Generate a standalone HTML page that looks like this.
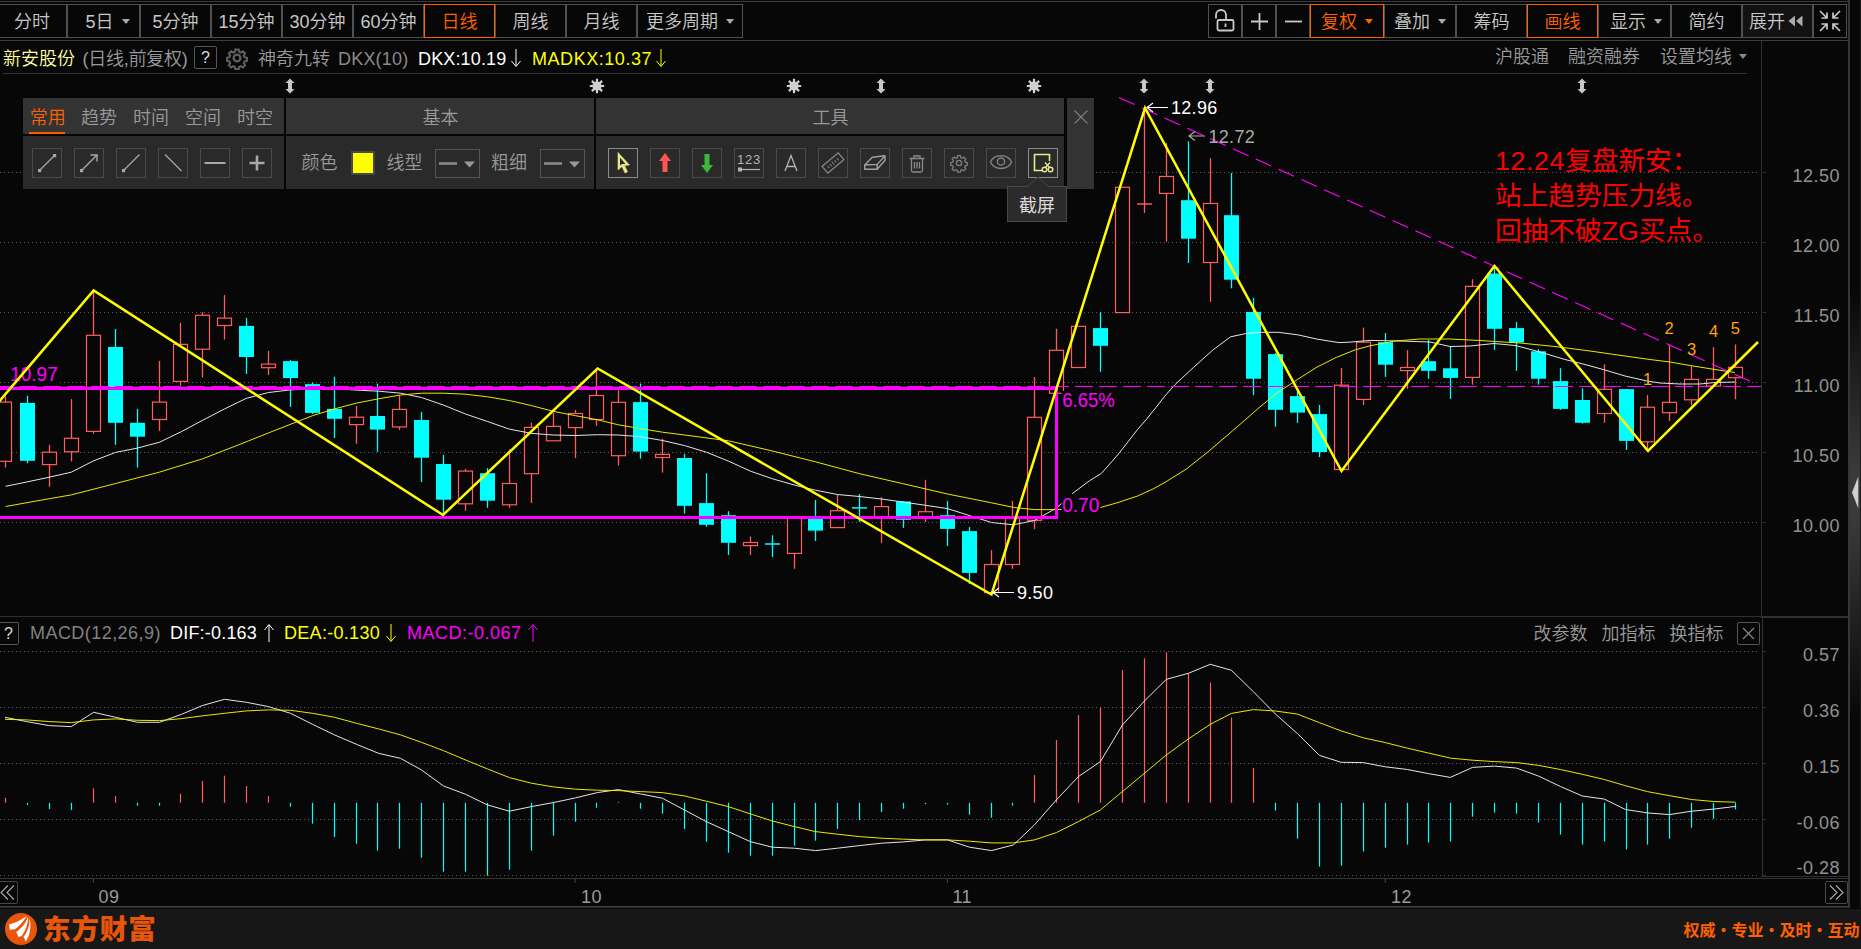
<!DOCTYPE html>
<html lang="zh"><head><meta charset="utf-8"><title>新安股份 日线</title>
<style>
html,body{margin:0;padding:0;background:#070707;}
body{width:1861px;height:949px;position:relative;overflow:hidden;font-family:"Liberation Sans","Noto Sans CJK SC",sans-serif;color:#c8c8c8;font-weight:350;}
.abs{position:absolute;}
.t{position:absolute;white-space:nowrap;line-height:1;}
.btn{position:absolute;top:4px;height:32px;border:1px solid #505050;box-sizing:content-box;text-align:center;line-height:34px;font-size:18px;color:#c8c8c8;white-space:nowrap;}
.btn.on{border-color:#ff6000;color:#ff6000;}
.tri{display:inline-block;width:0;height:0;border-left:4px solid transparent;border-right:4px solid transparent;border-top:5px solid #aaa;vertical-align:middle;margin-left:8px;position:relative;top:-2px;}
.on .tri{border-top-color:#ff6000;}
.ax{position:absolute;left:1780px;width:60px;text-align:right;font-size:18px;color:#929292;line-height:20px;height:20px;letter-spacing:0.5px;}
.tool{position:absolute;top:148px;width:28px;height:28px;border:1px solid #4a4a4a;}
.hd{position:absolute;background:#333;top:98px;height:35.5px;}
.bd{position:absolute;background:#2a2a2a;top:136px;height:53px;}
.tab{position:absolute;top:108px;font-size:18px;line-height:20px;color:#9a9a9a;white-space:nowrap;}
</style></head>
<body>
<svg class="abs" style="left:0;top:0" width="1861" height="949" viewBox="0 0 1861 949">
<line x1="0" y1="172.5" x2="1760" y2="172.5" stroke="#5c5c5c" stroke-width="1" stroke-dasharray="1 3"/>
<line x1="1763" y1="172.5" x2="1766" y2="172.5" stroke="#2e2e2e" stroke-width="1"/>
<line x1="0" y1="242.5" x2="1760" y2="242.5" stroke="#5c5c5c" stroke-width="1" stroke-dasharray="1 3"/>
<line x1="1763" y1="242.5" x2="1766" y2="242.5" stroke="#2e2e2e" stroke-width="1"/>
<line x1="0" y1="312.5" x2="1760" y2="312.5" stroke="#5c5c5c" stroke-width="1" stroke-dasharray="1 3"/>
<line x1="1763" y1="312.5" x2="1766" y2="312.5" stroke="#2e2e2e" stroke-width="1"/>
<line x1="0" y1="382.5" x2="1760" y2="382.5" stroke="#5c5c5c" stroke-width="1" stroke-dasharray="1 3"/>
<line x1="1763" y1="382.5" x2="1766" y2="382.5" stroke="#2e2e2e" stroke-width="1"/>
<line x1="0" y1="452.5" x2="1760" y2="452.5" stroke="#5c5c5c" stroke-width="1" stroke-dasharray="1 3"/>
<line x1="1763" y1="452.5" x2="1766" y2="452.5" stroke="#2e2e2e" stroke-width="1"/>
<line x1="0" y1="522.5" x2="1760" y2="522.5" stroke="#5c5c5c" stroke-width="1" stroke-dasharray="1 3"/>
<line x1="1763" y1="522.5" x2="1766" y2="522.5" stroke="#2e2e2e" stroke-width="1"/>
<line x1="0" y1="651.5" x2="1760" y2="651.5" stroke="#5c5c5c" stroke-width="1" stroke-dasharray="1 3"/>
<line x1="1763" y1="651.5" x2="1766" y2="651.5" stroke="#2e2e2e" stroke-width="1"/>
<line x1="0" y1="707.5" x2="1760" y2="707.5" stroke="#5c5c5c" stroke-width="1" stroke-dasharray="1 3"/>
<line x1="1763" y1="707.5" x2="1766" y2="707.5" stroke="#2e2e2e" stroke-width="1"/>
<line x1="0" y1="763.5" x2="1760" y2="763.5" stroke="#5c5c5c" stroke-width="1" stroke-dasharray="1 3"/>
<line x1="1763" y1="763.5" x2="1766" y2="763.5" stroke="#2e2e2e" stroke-width="1"/>
<line x1="0" y1="819.5" x2="1760" y2="819.5" stroke="#5c5c5c" stroke-width="1" stroke-dasharray="1 3"/>
<line x1="1763" y1="819.5" x2="1766" y2="819.5" stroke="#2e2e2e" stroke-width="1"/>
<line x1="0" y1="875.5" x2="1760" y2="875.5" stroke="#5c5c5c" stroke-width="1" stroke-dasharray="1 3"/>
<line x1="1763" y1="875.5" x2="1766" y2="875.5" stroke="#2e2e2e" stroke-width="1"/>
<line x1="0" y1="1.5" x2="1849" y2="1.5" stroke="#3c3c3c" stroke-width="1"/>
<line x1="0" y1="40.5" x2="1849" y2="40.5" stroke="#3c3c3c" stroke-width="1"/>
<line x1="3" y1="73.5" x2="1747" y2="73.5" stroke="#333" stroke-width="1"/>
<line x1="1761.5" y1="41" x2="1761.5" y2="616" stroke="#303030" stroke-width="1"/>
<line x1="1762.5" y1="617" x2="1762.5" y2="876.5" stroke="#303030" stroke-width="1"/>
<line x1="1761" y1="876.5" x2="1849" y2="876.5" stroke="#303030" stroke-width="1"/>
<line x1="0" y1="616.5" x2="1761" y2="616.5" stroke="#303030" stroke-width="1"/>
<line x1="1761" y1="617" x2="1848" y2="617" stroke="#303030" stroke-width="2"/>
<line x1="0" y1="878.5" x2="1848" y2="878.5" stroke="#333" stroke-width="1"/>
<line x1="0" y1="906.7" x2="1848" y2="906.7" stroke="#444" stroke-width="1.4"/>
<line x1="93.3" y1="878" x2="93.3" y2="883" stroke="#444" stroke-width="1"/>
<line x1="575.0" y1="878" x2="575.0" y2="883" stroke="#444" stroke-width="1"/>
<line x1="947.3" y1="878" x2="947.3" y2="883" stroke="#444" stroke-width="1"/>
<line x1="1385.2" y1="878" x2="1385.2" y2="883" stroke="#444" stroke-width="1"/>
<line x1="5.5" y1="396.3" x2="5.5" y2="402.1" stroke="#ff5c5c" stroke-width="1.3"/>
<line x1="5.5" y1="461.3" x2="5.5" y2="467.6" stroke="#ff5c5c" stroke-width="1.3"/>
<rect x="-2.5" y="402.1" width="14" height="59.2" fill="#070707" stroke="#ff5c5c" stroke-width="1.2"/>
<line x1="27.5" y1="395.8" x2="27.5" y2="463.3" stroke="#00ffff" stroke-width="1.3"/>
<rect x="20" y="402.9" width="15" height="57.9" fill="#00ffff"/>
<line x1="49.5" y1="444.8" x2="49.5" y2="452.2" stroke="#ff5c5c" stroke-width="1.3"/>
<line x1="49.5" y1="464.6" x2="49.5" y2="486.8" stroke="#ff5c5c" stroke-width="1.3"/>
<rect x="42.5" y="452.2" width="14" height="12.4" fill="#070707" stroke="#ff5c5c" stroke-width="1.2"/>
<line x1="71.5" y1="399.1" x2="71.5" y2="438.3" stroke="#ff5c5c" stroke-width="1.3"/>
<line x1="71.5" y1="451.7" x2="71.5" y2="461.5" stroke="#ff5c5c" stroke-width="1.3"/>
<rect x="64.5" y="438.3" width="14" height="13.4" fill="#070707" stroke="#ff5c5c" stroke-width="1.2"/>
<line x1="93.5" y1="290.6" x2="93.5" y2="335.3" stroke="#ff5c5c" stroke-width="1.3"/>
<line x1="93.5" y1="431.4" x2="93.5" y2="433.7" stroke="#ff5c5c" stroke-width="1.3"/>
<rect x="86.5" y="335.3" width="14" height="96.1" fill="#070707" stroke="#ff5c5c" stroke-width="1.2"/>
<line x1="115.5" y1="329.0" x2="115.5" y2="444.8" stroke="#00ffff" stroke-width="1.3"/>
<rect x="108" y="347.0" width="15" height="75.8" fill="#00ffff"/>
<line x1="137.5" y1="408.9" x2="137.5" y2="467.6" stroke="#00ffff" stroke-width="1.3"/>
<rect x="130" y="422.8" width="15" height="13.9" fill="#00ffff"/>
<line x1="159.5" y1="360.9" x2="159.5" y2="402.1" stroke="#ff5c5c" stroke-width="1.3"/>
<line x1="159.5" y1="419.5" x2="159.5" y2="430.9" stroke="#ff5c5c" stroke-width="1.3"/>
<rect x="152.5" y="402.1" width="14" height="17.4" fill="#070707" stroke="#ff5c5c" stroke-width="1.2"/>
<line x1="180.5" y1="322.9" x2="180.5" y2="344.4" stroke="#ff5c5c" stroke-width="1.3"/>
<line x1="180.5" y1="381.4" x2="180.5" y2="385.7" stroke="#ff5c5c" stroke-width="1.3"/>
<rect x="173.5" y="344.4" width="14" height="37.0" fill="#070707" stroke="#ff5c5c" stroke-width="1.2"/>
<line x1="202.5" y1="312.1" x2="202.5" y2="315.3" stroke="#ff5c5c" stroke-width="1.3"/>
<line x1="202.5" y1="349.2" x2="202.5" y2="377.6" stroke="#ff5c5c" stroke-width="1.3"/>
<rect x="195.5" y="315.3" width="14" height="33.9" fill="#070707" stroke="#ff5c5c" stroke-width="1.2"/>
<line x1="224.5" y1="295.1" x2="224.5" y2="318.1" stroke="#ff5c5c" stroke-width="1.3"/>
<line x1="224.5" y1="325.5" x2="224.5" y2="339.6" stroke="#ff5c5c" stroke-width="1.3"/>
<rect x="217.5" y="318.1" width="14" height="7.4" fill="#070707" stroke="#ff5c5c" stroke-width="1.2"/>
<line x1="246.5" y1="317.8" x2="246.5" y2="374.0" stroke="#00ffff" stroke-width="1.3"/>
<rect x="239" y="325.9" width="15" height="31.1" fill="#00ffff"/>
<line x1="268.5" y1="351.0" x2="268.5" y2="364.1" stroke="#ff5c5c" stroke-width="1.3"/>
<line x1="268.5" y1="367.7" x2="268.5" y2="375.0" stroke="#ff5c5c" stroke-width="1.3"/>
<rect x="261.5" y="364.1" width="14" height="3.6" fill="#070707" stroke="#ff5c5c" stroke-width="1.2"/>
<line x1="290.5" y1="360.0" x2="290.5" y2="406.9" stroke="#00ffff" stroke-width="1.3"/>
<rect x="283" y="361.1" width="15" height="16.9" fill="#00ffff"/>
<line x1="312.5" y1="382.3" x2="312.5" y2="414.0" stroke="#00ffff" stroke-width="1.3"/>
<rect x="305" y="384.1" width="15" height="28.8" fill="#00ffff"/>
<line x1="334.5" y1="376.8" x2="334.5" y2="438.0" stroke="#00ffff" stroke-width="1.3"/>
<rect x="327" y="408.9" width="15" height="9.9" fill="#00ffff"/>
<line x1="356.5" y1="405.9" x2="356.5" y2="417.2" stroke="#ff5c5c" stroke-width="1.3"/>
<line x1="356.5" y1="424.6" x2="356.5" y2="443.8" stroke="#ff5c5c" stroke-width="1.3"/>
<rect x="349.5" y="417.2" width="14" height="7.4" fill="#070707" stroke="#ff5c5c" stroke-width="1.2"/>
<line x1="377.5" y1="383.6" x2="377.5" y2="451.9" stroke="#00ffff" stroke-width="1.3"/>
<rect x="370" y="416.0" width="15" height="13.6" fill="#00ffff"/>
<line x1="399.5" y1="395.7" x2="399.5" y2="409.4" stroke="#ff5c5c" stroke-width="1.3"/>
<line x1="399.5" y1="426.9" x2="399.5" y2="429.9" stroke="#ff5c5c" stroke-width="1.3"/>
<rect x="392.5" y="409.4" width="14" height="17.5" fill="#070707" stroke="#ff5c5c" stroke-width="1.2"/>
<line x1="421.5" y1="411.9" x2="421.5" y2="482.0" stroke="#00ffff" stroke-width="1.3"/>
<rect x="414" y="420.0" width="15" height="37.7" fill="#00ffff"/>
<line x1="443.5" y1="454.9" x2="443.5" y2="515.1" stroke="#00ffff" stroke-width="1.3"/>
<rect x="436" y="464.0" width="15" height="35.7" fill="#00ffff"/>
<line x1="465.5" y1="468.9" x2="465.5" y2="471.1" stroke="#ff5c5c" stroke-width="1.3"/>
<line x1="465.5" y1="503.8" x2="465.5" y2="510.8" stroke="#ff5c5c" stroke-width="1.3"/>
<rect x="458.5" y="471.1" width="14" height="32.7" fill="#070707" stroke="#ff5c5c" stroke-width="1.2"/>
<line x1="487.5" y1="468.1" x2="487.5" y2="507.8" stroke="#00ffff" stroke-width="1.3"/>
<rect x="480" y="473.2" width="15" height="27.5" fill="#00ffff"/>
<line x1="509.5" y1="449.4" x2="509.5" y2="483.5" stroke="#ff5c5c" stroke-width="1.3"/>
<line x1="509.5" y1="504.8" x2="509.5" y2="507.8" stroke="#ff5c5c" stroke-width="1.3"/>
<rect x="502.5" y="483.5" width="14" height="21.3" fill="#070707" stroke="#ff5c5c" stroke-width="1.2"/>
<line x1="531.5" y1="422.6" x2="531.5" y2="427.4" stroke="#ff5c5c" stroke-width="1.3"/>
<line x1="531.5" y1="473.7" x2="531.5" y2="503.0" stroke="#ff5c5c" stroke-width="1.3"/>
<rect x="524.5" y="427.4" width="14" height="46.3" fill="#070707" stroke="#ff5c5c" stroke-width="1.2"/>
<line x1="553.5" y1="412.9" x2="553.5" y2="426.4" stroke="#ff5c5c" stroke-width="1.3"/>
<rect x="546.5" y="426.4" width="14" height="14.4" fill="#070707" stroke="#ff5c5c" stroke-width="1.2"/>
<line x1="575.5" y1="409.9" x2="575.5" y2="413.5" stroke="#ff5c5c" stroke-width="1.3"/>
<line x1="575.5" y1="427.6" x2="575.5" y2="458.0" stroke="#ff5c5c" stroke-width="1.3"/>
<rect x="568.5" y="413.5" width="14" height="14.1" fill="#070707" stroke="#ff5c5c" stroke-width="1.2"/>
<line x1="596.5" y1="369.0" x2="596.5" y2="395.5" stroke="#ff5c5c" stroke-width="1.3"/>
<line x1="596.5" y1="419.5" x2="596.5" y2="425.8" stroke="#ff5c5c" stroke-width="1.3"/>
<rect x="589.5" y="395.5" width="14" height="24.0" fill="#070707" stroke="#ff5c5c" stroke-width="1.2"/>
<line x1="618.5" y1="390.4" x2="618.5" y2="402.3" stroke="#ff5c5c" stroke-width="1.3"/>
<line x1="618.5" y1="455.7" x2="618.5" y2="465.6" stroke="#ff5c5c" stroke-width="1.3"/>
<rect x="611.5" y="402.3" width="14" height="53.4" fill="#070707" stroke="#ff5c5c" stroke-width="1.2"/>
<line x1="640.5" y1="383.6" x2="640.5" y2="458.7" stroke="#00ffff" stroke-width="1.3"/>
<rect x="633" y="402.1" width="15" height="49.5" fill="#00ffff"/>
<line x1="662.5" y1="438.7" x2="662.5" y2="454.4" stroke="#ff5c5c" stroke-width="1.3"/>
<line x1="662.5" y1="457.5" x2="662.5" y2="472.6" stroke="#ff5c5c" stroke-width="1.3"/>
<rect x="655.5" y="454.4" width="14" height="3.1" fill="#070707" stroke="#ff5c5c" stroke-width="1.2"/>
<line x1="684.5" y1="453.9" x2="684.5" y2="513.6" stroke="#00ffff" stroke-width="1.3"/>
<rect x="677" y="458.0" width="15" height="47.8" fill="#00ffff"/>
<line x1="706.5" y1="473.2" x2="706.5" y2="526.8" stroke="#00ffff" stroke-width="1.3"/>
<rect x="699" y="503.1" width="15" height="21.7" fill="#00ffff"/>
<line x1="728.5" y1="511.2" x2="728.5" y2="554.9" stroke="#00ffff" stroke-width="1.3"/>
<rect x="721" y="515.2" width="15" height="27.6" fill="#00ffff"/>
<line x1="750.5" y1="536.5" x2="750.5" y2="542.5" stroke="#ff5c5c" stroke-width="1.3"/>
<line x1="750.5" y1="545.6" x2="750.5" y2="554.9" stroke="#ff5c5c" stroke-width="1.3"/>
<rect x="743.5" y="542.5" width="14" height="3.1" fill="#070707" stroke="#ff5c5c" stroke-width="1.2"/>
<line x1="772.5" y1="535.2" x2="772.5" y2="557.0" stroke="#00ffff" stroke-width="1.3"/>
<line x1="765" y1="544.0" x2="780" y2="544.0" stroke="#00ffff" stroke-width="1.5"/>
<line x1="794.5" y1="553.4" x2="794.5" y2="568.8" stroke="#ff5c5c" stroke-width="1.3"/>
<rect x="787.5" y="518.0" width="14" height="35.4" fill="#070707" stroke="#ff5c5c" stroke-width="1.2"/>
<line x1="815.5" y1="500.0" x2="815.5" y2="541.0" stroke="#00ffff" stroke-width="1.3"/>
<rect x="808" y="518.7" width="15" height="11.9" fill="#00ffff"/>
<line x1="837.5" y1="494.7" x2="837.5" y2="510.7" stroke="#ff5c5c" stroke-width="1.3"/>
<rect x="830.5" y="510.7" width="14" height="16.9" fill="#070707" stroke="#ff5c5c" stroke-width="1.2"/>
<line x1="859.5" y1="494.0" x2="859.5" y2="521.8" stroke="#00ffff" stroke-width="1.3"/>
<line x1="852" y1="507.9" x2="867" y2="507.9" stroke="#00ffff" stroke-width="1.5"/>
<line x1="881.5" y1="497.2" x2="881.5" y2="506.6" stroke="#ff5c5c" stroke-width="1.3"/>
<line x1="881.5" y1="516.7" x2="881.5" y2="543.0" stroke="#ff5c5c" stroke-width="1.3"/>
<rect x="874.5" y="506.6" width="14" height="10.1" fill="#070707" stroke="#ff5c5c" stroke-width="1.2"/>
<line x1="903.5" y1="501.0" x2="903.5" y2="527.9" stroke="#00ffff" stroke-width="1.3"/>
<rect x="896" y="501.5" width="15" height="18.3" fill="#00ffff"/>
<line x1="925.5" y1="479.8" x2="925.5" y2="511.7" stroke="#ff5c5c" stroke-width="1.3"/>
<line x1="925.5" y1="516.7" x2="925.5" y2="522.0" stroke="#ff5c5c" stroke-width="1.3"/>
<rect x="918.5" y="511.7" width="14" height="5.0" fill="#070707" stroke="#ff5c5c" stroke-width="1.2"/>
<line x1="947.5" y1="501.0" x2="947.5" y2="546.1" stroke="#00ffff" stroke-width="1.3"/>
<rect x="940" y="515.2" width="15" height="13.7" fill="#00ffff"/>
<line x1="969.5" y1="527.1" x2="969.5" y2="584.0" stroke="#00ffff" stroke-width="1.3"/>
<rect x="962" y="531.1" width="15" height="41.8" fill="#00ffff"/>
<line x1="991.5" y1="550.1" x2="991.5" y2="564.5" stroke="#ff5c5c" stroke-width="1.3"/>
<line x1="991.5" y1="592.6" x2="991.5" y2="595.1" stroke="#ff5c5c" stroke-width="1.3"/>
<rect x="984.5" y="564.5" width="14" height="28.1" fill="#070707" stroke="#ff5c5c" stroke-width="1.2"/>
<line x1="1012.5" y1="501.0" x2="1012.5" y2="516.7" stroke="#ff5c5c" stroke-width="1.3"/>
<line x1="1012.5" y1="564.5" x2="1012.5" y2="568.8" stroke="#ff5c5c" stroke-width="1.3"/>
<rect x="1005.5" y="516.7" width="14" height="47.8" fill="#070707" stroke="#ff5c5c" stroke-width="1.2"/>
<line x1="1034.5" y1="377.1" x2="1034.5" y2="417.3" stroke="#ff5c5c" stroke-width="1.3"/>
<line x1="1034.5" y1="520.3" x2="1034.5" y2="529.1" stroke="#ff5c5c" stroke-width="1.3"/>
<rect x="1027.5" y="417.3" width="14" height="103.0" fill="#070707" stroke="#ff5c5c" stroke-width="1.2"/>
<line x1="1056.5" y1="328.8" x2="1056.5" y2="350.3" stroke="#ff5c5c" stroke-width="1.3"/>
<rect x="1049.5" y="350.3" width="14" height="43.0" fill="#070707" stroke="#ff5c5c" stroke-width="1.2"/>
<rect x="1071.5" y="326.3" width="14" height="41.2" fill="#070707" stroke="#ff5c5c" stroke-width="1.2"/>
<line x1="1100.5" y1="312.1" x2="1100.5" y2="371.8" stroke="#00ffff" stroke-width="1.3"/>
<rect x="1093" y="328.1" width="15" height="17.7" fill="#00ffff"/>
<rect x="1115.5" y="187.3" width="14" height="125.3" fill="#070707" stroke="#ff5c5c" stroke-width="1.2"/>
<line x1="1144.5" y1="110.2" x2="1144.5" y2="204.0" stroke="#ff5c5c" stroke-width="1.3"/>
<line x1="1144.5" y1="204.0" x2="1144.5" y2="212.9" stroke="#ff5c5c" stroke-width="1.3"/>
<line x1="1137" y1="204.0" x2="1152" y2="204.0" stroke="#ff5c5c" stroke-width="1.5"/>
<line x1="1166.5" y1="143.1" x2="1166.5" y2="176.5" stroke="#ff5c5c" stroke-width="1.3"/>
<line x1="1166.5" y1="193.4" x2="1166.5" y2="241.7" stroke="#ff5c5c" stroke-width="1.3"/>
<rect x="1159.5" y="176.5" width="14" height="16.9" fill="#070707" stroke="#ff5c5c" stroke-width="1.2"/>
<line x1="1188.5" y1="141.3" x2="1188.5" y2="263.0" stroke="#00ffff" stroke-width="1.3"/>
<rect x="1181" y="200.2" width="15" height="38.5" fill="#00ffff"/>
<line x1="1210.5" y1="158.2" x2="1210.5" y2="203.5" stroke="#ff5c5c" stroke-width="1.3"/>
<line x1="1210.5" y1="262.5" x2="1210.5" y2="301.9" stroke="#ff5c5c" stroke-width="1.3"/>
<rect x="1203.5" y="203.5" width="14" height="59.0" fill="#070707" stroke="#ff5c5c" stroke-width="1.2"/>
<line x1="1231.5" y1="172.9" x2="1231.5" y2="288.3" stroke="#00ffff" stroke-width="1.3"/>
<rect x="1224" y="215.2" width="15" height="64.5" fill="#00ffff"/>
<line x1="1253.5" y1="297.7" x2="1253.5" y2="395.1" stroke="#00ffff" stroke-width="1.3"/>
<rect x="1246" y="311.9" width="15" height="66.8" fill="#00ffff"/>
<line x1="1275.5" y1="353.0" x2="1275.5" y2="426.7" stroke="#00ffff" stroke-width="1.3"/>
<rect x="1268" y="354.1" width="15" height="55.7" fill="#00ffff"/>
<line x1="1297.5" y1="391.3" x2="1297.5" y2="422.9" stroke="#00ffff" stroke-width="1.3"/>
<rect x="1290" y="396.1" width="15" height="16.5" fill="#00ffff"/>
<line x1="1319.5" y1="405.0" x2="1319.5" y2="457.1" stroke="#00ffff" stroke-width="1.3"/>
<rect x="1312" y="414.1" width="15" height="37.9" fill="#00ffff"/>
<line x1="1341.5" y1="368.0" x2="1341.5" y2="385.2" stroke="#ff5c5c" stroke-width="1.3"/>
<rect x="1334.5" y="385.2" width="14" height="84.3" fill="#070707" stroke="#ff5c5c" stroke-width="1.2"/>
<line x1="1363.5" y1="327.6" x2="1363.5" y2="342.2" stroke="#ff5c5c" stroke-width="1.3"/>
<line x1="1363.5" y1="399.4" x2="1363.5" y2="405.0" stroke="#ff5c5c" stroke-width="1.3"/>
<rect x="1356.5" y="342.2" width="14" height="57.2" fill="#070707" stroke="#ff5c5c" stroke-width="1.2"/>
<line x1="1385.5" y1="333.1" x2="1385.5" y2="376.9" stroke="#00ffff" stroke-width="1.3"/>
<rect x="1378" y="342.2" width="15" height="22.5" fill="#00ffff"/>
<line x1="1407.5" y1="350.1" x2="1407.5" y2="367.5" stroke="#ff5c5c" stroke-width="1.3"/>
<line x1="1407.5" y1="370.6" x2="1407.5" y2="388.8" stroke="#ff5c5c" stroke-width="1.3"/>
<rect x="1400.5" y="367.5" width="14" height="3.1" fill="#070707" stroke="#ff5c5c" stroke-width="1.2"/>
<line x1="1428.5" y1="340.0" x2="1428.5" y2="378.7" stroke="#00ffff" stroke-width="1.3"/>
<rect x="1421" y="361.2" width="15" height="9.6" fill="#00ffff"/>
<line x1="1450.5" y1="346.3" x2="1450.5" y2="398.9" stroke="#00ffff" stroke-width="1.3"/>
<rect x="1443" y="368.3" width="15" height="9.6" fill="#00ffff"/>
<line x1="1472.5" y1="279.2" x2="1472.5" y2="286.4" stroke="#ff5c5c" stroke-width="1.3"/>
<line x1="1472.5" y1="377.4" x2="1472.5" y2="384.7" stroke="#ff5c5c" stroke-width="1.3"/>
<rect x="1465.5" y="286.4" width="14" height="91.0" fill="#070707" stroke="#ff5c5c" stroke-width="1.2"/>
<line x1="1494.5" y1="265.5" x2="1494.5" y2="349.9" stroke="#00ffff" stroke-width="1.3"/>
<rect x="1487" y="273.5" width="15" height="55.3" fill="#00ffff"/>
<line x1="1516.5" y1="322.0" x2="1516.5" y2="370.9" stroke="#00ffff" stroke-width="1.3"/>
<rect x="1509" y="328.1" width="15" height="14.4" fill="#00ffff"/>
<line x1="1538.5" y1="349.2" x2="1538.5" y2="384.6" stroke="#00ffff" stroke-width="1.3"/>
<rect x="1531" y="351.3" width="15" height="27.4" fill="#00ffff"/>
<line x1="1560.5" y1="368.2" x2="1560.5" y2="409.9" stroke="#00ffff" stroke-width="1.3"/>
<rect x="1553" y="381.1" width="15" height="27.8" fill="#00ffff"/>
<line x1="1582.5" y1="388.2" x2="1582.5" y2="423.6" stroke="#00ffff" stroke-width="1.3"/>
<rect x="1575" y="400.0" width="15" height="22.8" fill="#00ffff"/>
<line x1="1604.5" y1="364.2" x2="1604.5" y2="389.3" stroke="#ff5c5c" stroke-width="1.3"/>
<line x1="1604.5" y1="413.5" x2="1604.5" y2="422.8" stroke="#ff5c5c" stroke-width="1.3"/>
<rect x="1597.5" y="389.3" width="14" height="24.2" fill="#070707" stroke="#ff5c5c" stroke-width="1.2"/>
<line x1="1626.5" y1="389.1" x2="1626.5" y2="450.0" stroke="#00ffff" stroke-width="1.3"/>
<rect x="1619" y="389.1" width="15" height="51.8" fill="#00ffff"/>
<line x1="1647.5" y1="395.0" x2="1647.5" y2="407.2" stroke="#ff5c5c" stroke-width="1.3"/>
<line x1="1647.5" y1="441.8" x2="1647.5" y2="452.1" stroke="#ff5c5c" stroke-width="1.3"/>
<rect x="1640.5" y="407.2" width="14" height="34.6" fill="#070707" stroke="#ff5c5c" stroke-width="1.2"/>
<line x1="1669.5" y1="344.6" x2="1669.5" y2="402.3" stroke="#ff5c5c" stroke-width="1.3"/>
<line x1="1669.5" y1="412.7" x2="1669.5" y2="420.9" stroke="#ff5c5c" stroke-width="1.3"/>
<rect x="1662.5" y="402.3" width="14" height="10.4" fill="#070707" stroke="#ff5c5c" stroke-width="1.2"/>
<line x1="1691.5" y1="366.3" x2="1691.5" y2="379.4" stroke="#ff5c5c" stroke-width="1.3"/>
<line x1="1691.5" y1="399.8" x2="1691.5" y2="405.1" stroke="#ff5c5c" stroke-width="1.3"/>
<rect x="1684.5" y="379.4" width="14" height="20.4" fill="#070707" stroke="#ff5c5c" stroke-width="1.2"/>
<line x1="1713.5" y1="347.1" x2="1713.5" y2="379.4" stroke="#ff5c5c" stroke-width="1.3"/>
<rect x="1706.5" y="379.4" width="14" height="6.7" fill="#070707" stroke="#ff5c5c" stroke-width="1.2"/>
<line x1="1735.5" y1="344.4" x2="1735.5" y2="367.4" stroke="#ff5c5c" stroke-width="1.3"/>
<line x1="1735.5" y1="377.7" x2="1735.5" y2="399.2" stroke="#ff5c5c" stroke-width="1.3"/>
<rect x="1728.5" y="367.4" width="14" height="10.3" fill="#070707" stroke="#ff5c5c" stroke-width="1.2"/>
<polyline points="5.6,486.3 25.3,482.3 49.3,477.2 71.3,472.2 93.6,460.8 115.6,452.4 137.3,448.1 159.3,442.3 181.3,431.7 202.6,420.3 224.6,408.9 246.4,398.3 268.5,392.5 290.5,389.9 312.5,388.7 334.5,388.7 361.5,390.4 378.5,391.2 400.5,393.2 421.5,397.5 443.5,405.1 465.5,414.0 487.5,421.5 509.3,429.1 531.5,433.4 553.5,435.0 575.6,435.5 597.6,434.7 618.3,435.0 640.3,436.7 662.6,440.5 684.6,445.6 706.4,452.2 728.5,461.1 750.5,471.2 772.5,478.8 794.5,485.1 815.5,490.2 837.5,494.5 859.5,496.5 881.5,499.0 903.5,502.1 925.5,505.3 947.5,508.6 969.3,515.5 991.5,522.5 1013.5,524.8 1034.5,520.5 1056.6,507.9 1074.2,492.2 1089.7,480.6 1101.3,473.5 1111.6,461.9 1119.3,452.9 1128.4,441.3 1137.4,429.7 1145.8,420.0 1155.8,407.7 1164.8,396.1 1175.1,384.5 1193.2,367.7 1212.5,350.3 1230.6,336.8 1246.1,333.5 1259.0,332.3 1278.3,332.3 1297.7,334.8 1317.0,339.1 1338.9,342.6 1349.2,342.2 1370.0,340.4 1400.0,341.0 1430.0,342.0 1450.0,346.5 1470.0,346.0 1494.0,343.5 1516.0,345.6 1540.0,352.0 1565.0,359.5 1585.0,364.5 1605.0,370.0 1625.0,376.0 1647.0,381.0 1660.0,383.0 1680.0,384.0 1700.0,384.0 1715.0,382.5 1735.0,382.0" fill="none" stroke="#f0f0f0" stroke-width="0.95" stroke-linejoin="round"/>
<polyline points="5.6,506.5 49.3,498.7 71.3,494.9 115.6,483.5 159.3,472.2 202.6,458.8 240.0,444.3 268.5,432.9 312.5,415.7 334.5,408.9 356.5,403.1 378.5,398.8 400.5,395.0 421.5,393.2 443.5,393.2 465.5,394.2 487.5,396.8 509.3,400.5 531.5,405.6 553.5,411.4 575.6,415.7 597.6,419.8 618.3,424.8 640.3,428.6 662.6,432.2 684.6,435.0 728.5,440.8 772.5,451.0 815.5,461.8 859.5,473.7 903.5,483.8 947.5,494.0 991.5,502.8 1013.5,507.4 1034.5,509.6 1056.6,509.6 1100.0,507.7 1118.0,502.5 1137.4,496.1 1152.9,489.0 1165.8,481.9 1186.4,469.0 1208.3,451.6 1226.4,436.1 1244.4,420.6 1259.0,407.7 1278.3,392.2 1297.7,379.3 1317.0,367.1 1336.3,357.4 1355.7,349.7 1370.0,345.8 1395.0,341.0 1420.0,339.0 1450.0,339.0 1480.0,340.5 1495.0,341.5 1520.0,343.0 1555.0,346.5 1590.0,351.0 1625.0,356.0 1650.0,359.5 1670.0,362.0 1690.0,365.5 1715.0,369.5 1735.0,372.5" fill="none" stroke="#f4f400" stroke-width="0.95" stroke-linejoin="round"/>
<line x1="0" y1="386.5" x2="1761" y2="386.5" stroke="#ff00ff" stroke-width="1" stroke-dasharray="18 6" stroke-dashoffset="5"/>
<rect x="-10" y="388.5" width="1066.5" height="129" fill="none" stroke="#ff00ff" stroke-width="3"/>
<line x1="1119" y1="97.5" x2="1752" y2="382" stroke="#ff00ff" stroke-width="1.2" stroke-dasharray="17 8"/>
<rect x="9.5" y="364.5" width="50.0" height="20.0" fill="#070707"/>
<text x="10.2" y="381.0" font-family="Liberation Sans, sans-serif" font-size="19.8" fill="#ff00ff" textLength="47.6" lengthAdjust="spacingAndGlyphs">10.97</text>
<rect x="1061.5" y="391.0" width="56.0" height="19.0" fill="#070707"/>
<text x="1062.2" y="406.7" font-family="Liberation Sans, sans-serif" font-size="19.8" fill="#ff00ff" textLength="52.6" lengthAdjust="spacingAndGlyphs">6.65%</text>
<rect x="1061.5" y="494.0" width="39.0" height="20.0" fill="#070707"/>
<text x="1062.2" y="511.7" font-family="Liberation Sans, sans-serif" font-size="19.8" fill="#ff00ff" textLength="37.2" lengthAdjust="spacingAndGlyphs">0.70</text>
<polyline points="-3.0,404.0 93.6,290.5 443.0,515.0 597.6,368.5 991.5,594.5 1145.0,108.0 1341.5,471.0 1494.5,266.0 1648.0,451.0 1758.0,342.0" fill="none" stroke="#ffff00" stroke-width="2.5" stroke-linejoin="miter"/>
<line x1="5.5" y1="797.7" x2="5.5" y2="802.8" stroke="#ff5c5c" stroke-width="1.2"/>
<line x1="27.5" y1="802.8" x2="27.5" y2="805.0" stroke="#00ffff" stroke-width="1.2"/>
<line x1="49.5" y1="802.8" x2="49.5" y2="809.0" stroke="#00ffff" stroke-width="1.2"/>
<line x1="71.5" y1="802.8" x2="71.5" y2="810.0" stroke="#00ffff" stroke-width="1.2"/>
<line x1="93.5" y1="788.3" x2="93.5" y2="802.8" stroke="#ff5c5c" stroke-width="1.2"/>
<line x1="115.5" y1="796.0" x2="115.5" y2="802.8" stroke="#ff5c5c" stroke-width="1.2"/>
<line x1="137.5" y1="802.8" x2="137.5" y2="805.7" stroke="#00ffff" stroke-width="1.2"/>
<line x1="159.5" y1="802.8" x2="159.5" y2="805.7" stroke="#00ffff" stroke-width="1.2"/>
<line x1="180.5" y1="793.7" x2="180.5" y2="802.8" stroke="#ff5c5c" stroke-width="1.2"/>
<line x1="202.5" y1="781.0" x2="202.5" y2="802.8" stroke="#ff5c5c" stroke-width="1.2"/>
<line x1="224.5" y1="775.7" x2="224.5" y2="802.8" stroke="#ff5c5c" stroke-width="1.2"/>
<line x1="246.5" y1="786.0" x2="246.5" y2="802.8" stroke="#ff5c5c" stroke-width="1.2"/>
<line x1="268.5" y1="796.0" x2="268.5" y2="802.8" stroke="#ff5c5c" stroke-width="1.2"/>
<line x1="290.5" y1="802.8" x2="290.5" y2="806.7" stroke="#00ffff" stroke-width="1.2"/>
<line x1="312.5" y1="802.8" x2="312.5" y2="823.7" stroke="#00ffff" stroke-width="1.2"/>
<line x1="334.5" y1="802.8" x2="334.5" y2="837.0" stroke="#00ffff" stroke-width="1.2"/>
<line x1="356.5" y1="802.8" x2="356.5" y2="843.7" stroke="#00ffff" stroke-width="1.2"/>
<line x1="377.5" y1="802.8" x2="377.5" y2="850.7" stroke="#00ffff" stroke-width="1.2"/>
<line x1="399.5" y1="802.8" x2="399.5" y2="848.7" stroke="#00ffff" stroke-width="1.2"/>
<line x1="421.5" y1="802.8" x2="421.5" y2="857.7" stroke="#00ffff" stroke-width="1.2"/>
<line x1="443.5" y1="802.8" x2="443.5" y2="871.7" stroke="#00ffff" stroke-width="1.2"/>
<line x1="465.5" y1="802.8" x2="465.5" y2="871.7" stroke="#00ffff" stroke-width="1.2"/>
<line x1="487.5" y1="802.8" x2="487.5" y2="875.7" stroke="#00ffff" stroke-width="1.2"/>
<line x1="509.5" y1="802.8" x2="509.5" y2="869.7" stroke="#00ffff" stroke-width="1.2"/>
<line x1="531.5" y1="802.8" x2="531.5" y2="850.7" stroke="#00ffff" stroke-width="1.2"/>
<line x1="553.5" y1="802.8" x2="553.5" y2="835.7" stroke="#00ffff" stroke-width="1.2"/>
<line x1="575.5" y1="802.8" x2="575.5" y2="821.7" stroke="#00ffff" stroke-width="1.2"/>
<line x1="596.5" y1="802.8" x2="596.5" y2="807.7" stroke="#00ffff" stroke-width="1.2"/>
<line x1="618.5" y1="801.8" x2="618.5" y2="802.8" stroke="#ff5c5c" stroke-width="1.2"/>
<line x1="640.5" y1="802.8" x2="640.5" y2="808.7" stroke="#00ffff" stroke-width="1.2"/>
<line x1="662.5" y1="802.8" x2="662.5" y2="813.7" stroke="#00ffff" stroke-width="1.2"/>
<line x1="684.5" y1="802.8" x2="684.5" y2="829.0" stroke="#00ffff" stroke-width="1.2"/>
<line x1="706.5" y1="802.8" x2="706.5" y2="841.7" stroke="#00ffff" stroke-width="1.2"/>
<line x1="728.5" y1="802.8" x2="728.5" y2="852.7" stroke="#00ffff" stroke-width="1.2"/>
<line x1="750.5" y1="802.8" x2="750.5" y2="855.7" stroke="#00ffff" stroke-width="1.2"/>
<line x1="772.5" y1="802.8" x2="772.5" y2="855.7" stroke="#00ffff" stroke-width="1.2"/>
<line x1="794.5" y1="802.8" x2="794.5" y2="845.7" stroke="#00ffff" stroke-width="1.2"/>
<line x1="815.5" y1="802.8" x2="815.5" y2="840.7" stroke="#00ffff" stroke-width="1.2"/>
<line x1="837.5" y1="802.8" x2="837.5" y2="829.0" stroke="#00ffff" stroke-width="1.2"/>
<line x1="859.5" y1="802.8" x2="859.5" y2="820.0" stroke="#00ffff" stroke-width="1.2"/>
<line x1="881.5" y1="802.8" x2="881.5" y2="812.0" stroke="#00ffff" stroke-width="1.2"/>
<line x1="903.5" y1="802.8" x2="903.5" y2="808.7" stroke="#00ffff" stroke-width="1.2"/>
<line x1="925.5" y1="802.8" x2="925.5" y2="804.0" stroke="#00ffff" stroke-width="1.2"/>
<line x1="947.5" y1="802.8" x2="947.5" y2="804.7" stroke="#00ffff" stroke-width="1.2"/>
<line x1="969.5" y1="802.8" x2="969.5" y2="814.7" stroke="#00ffff" stroke-width="1.2"/>
<line x1="991.5" y1="802.8" x2="991.5" y2="817.7" stroke="#00ffff" stroke-width="1.2"/>
<line x1="1012.5" y1="802.8" x2="1012.5" y2="805.7" stroke="#00ffff" stroke-width="1.2"/>
<line x1="1034.5" y1="775.0" x2="1034.5" y2="802.8" stroke="#ff5c5c" stroke-width="1.2"/>
<line x1="1056.5" y1="740.0" x2="1056.5" y2="802.8" stroke="#ff5c5c" stroke-width="1.2"/>
<line x1="1078.5" y1="715.0" x2="1078.5" y2="802.8" stroke="#ff5c5c" stroke-width="1.2"/>
<line x1="1100.5" y1="707.7" x2="1100.5" y2="802.8" stroke="#ff5c5c" stroke-width="1.2"/>
<line x1="1122.5" y1="670.0" x2="1122.5" y2="802.8" stroke="#ff5c5c" stroke-width="1.2"/>
<line x1="1144.5" y1="658.3" x2="1144.5" y2="802.8" stroke="#ff5c5c" stroke-width="1.2"/>
<line x1="1166.5" y1="652.3" x2="1166.5" y2="802.8" stroke="#ff5c5c" stroke-width="1.2"/>
<line x1="1188.5" y1="673.3" x2="1188.5" y2="802.8" stroke="#ff5c5c" stroke-width="1.2"/>
<line x1="1210.5" y1="682.7" x2="1210.5" y2="802.8" stroke="#ff5c5c" stroke-width="1.2"/>
<line x1="1231.5" y1="717.5" x2="1231.5" y2="802.8" stroke="#ff5c5c" stroke-width="1.2"/>
<line x1="1253.5" y1="768.1" x2="1253.5" y2="802.8" stroke="#ff5c5c" stroke-width="1.2"/>
<line x1="1275.5" y1="802.8" x2="1275.5" y2="810.5" stroke="#00ffff" stroke-width="1.2"/>
<line x1="1297.5" y1="802.8" x2="1297.5" y2="838.7" stroke="#00ffff" stroke-width="1.2"/>
<line x1="1319.5" y1="802.8" x2="1319.5" y2="866.6" stroke="#00ffff" stroke-width="1.2"/>
<line x1="1341.5" y1="802.8" x2="1341.5" y2="865.6" stroke="#00ffff" stroke-width="1.2"/>
<line x1="1363.5" y1="802.8" x2="1363.5" y2="851.5" stroke="#00ffff" stroke-width="1.2"/>
<line x1="1385.5" y1="802.8" x2="1385.5" y2="847.7" stroke="#00ffff" stroke-width="1.2"/>
<line x1="1407.5" y1="802.8" x2="1407.5" y2="844.6" stroke="#00ffff" stroke-width="1.2"/>
<line x1="1428.5" y1="802.8" x2="1428.5" y2="842.5" stroke="#00ffff" stroke-width="1.2"/>
<line x1="1450.5" y1="802.8" x2="1450.5" y2="841.5" stroke="#00ffff" stroke-width="1.2"/>
<line x1="1472.5" y1="802.8" x2="1472.5" y2="816.7" stroke="#00ffff" stroke-width="1.2"/>
<line x1="1494.5" y1="802.8" x2="1494.5" y2="812.6" stroke="#00ffff" stroke-width="1.2"/>
<line x1="1516.5" y1="802.8" x2="1516.5" y2="813.6" stroke="#00ffff" stroke-width="1.2"/>
<line x1="1538.5" y1="802.8" x2="1538.5" y2="822.5" stroke="#00ffff" stroke-width="1.2"/>
<line x1="1560.5" y1="802.8" x2="1560.5" y2="834.6" stroke="#00ffff" stroke-width="1.2"/>
<line x1="1582.5" y1="802.8" x2="1582.5" y2="844.6" stroke="#00ffff" stroke-width="1.2"/>
<line x1="1604.5" y1="802.8" x2="1604.5" y2="841.5" stroke="#00ffff" stroke-width="1.2"/>
<line x1="1626.5" y1="802.8" x2="1626.5" y2="849.4" stroke="#00ffff" stroke-width="1.2"/>
<line x1="1647.5" y1="802.8" x2="1647.5" y2="844.6" stroke="#00ffff" stroke-width="1.2"/>
<line x1="1669.5" y1="802.8" x2="1669.5" y2="838.7" stroke="#00ffff" stroke-width="1.2"/>
<line x1="1691.5" y1="802.8" x2="1691.5" y2="827.7" stroke="#00ffff" stroke-width="1.2"/>
<line x1="1713.5" y1="802.8" x2="1713.5" y2="818.8" stroke="#00ffff" stroke-width="1.2"/>
<line x1="1735.5" y1="802.8" x2="1735.5" y2="809.5" stroke="#00ffff" stroke-width="1.2"/>
<polyline points="5.0,717.3 26.7,721.6 49.3,725.6 71.3,726.6 93.6,712.3 115.6,717.3 137.6,722.3 159.6,722.3 181.6,714.3 202.2,705.6 224.5,699.3 246.5,702.3 268.5,706.6 290.5,713.3 312.5,724.3 334.5,734.9 356.5,744.3 378.5,753.3 400.5,758.3 421.4,769.9 443.4,785.9 465.4,794.2 487.4,804.9 509.4,811.2 531.4,806.6 553.4,802.6 575.4,797.9 597.3,792.6 618.3,789.6 640.3,793.9 662.3,798.2 684.3,809.9 706.3,821.6 728.3,831.6 750.3,841.6 772.2,847.2 794.2,848.2 815.6,850.6 837.5,848.2 859.5,845.6 881.5,843.2 903.5,841.9 925.5,839.9 947.5,839.9 969.5,847.2 991.5,850.6 1013.5,844.9 1034.4,824.9 1056.4,799.9 1078.4,776.6 1100.4,761.6 1122.4,725.0 1144.4,701.0 1166.4,679.3 1188.4,673.3 1210.3,664.3 1231.4,670.3 1253.4,691.7 1275.5,714.1 1297.5,733.7 1319.5,755.4 1341.2,762.3 1363.3,762.6 1385.3,766.8 1407.4,769.5 1428.4,773.6 1450.4,777.4 1472.5,767.4 1494.5,766.1 1516.6,768.1 1538.6,776.1 1560.3,786.4 1582.3,796.0 1604.4,799.1 1625.4,809.5 1647.4,812.9 1669.5,814.6 1691.5,811.2 1713.6,809.1 1735.6,806.4" fill="none" stroke="#f0f0f0" stroke-width="0.95" stroke-linejoin="round"/>
<polyline points="5.0,719.3 26.7,719.9 49.3,721.6 71.3,722.6 93.6,719.9 115.6,718.9 137.6,720.3 159.6,720.6 181.6,718.6 202.2,715.9 224.5,713.3 246.5,710.9 268.5,709.9 290.5,710.3 312.5,713.3 334.5,717.3 356.5,723.3 378.5,728.9 400.5,734.9 421.4,742.3 443.4,750.6 465.4,759.9 487.4,768.9 509.4,777.6 531.4,783.2 553.4,786.9 575.4,789.2 597.3,790.2 618.3,790.6 640.3,791.6 662.3,792.6 684.3,795.9 706.3,801.2 728.3,806.6 750.3,813.9 772.2,820.9 794.2,826.6 815.6,831.6 837.5,834.2 859.5,836.6 881.5,838.2 903.5,839.2 925.5,839.9 947.5,839.9 969.5,841.2 991.5,842.9 1013.5,842.9 1034.4,839.9 1056.4,832.6 1078.4,821.6 1100.4,809.9 1122.4,791.6 1144.4,773.3 1166.4,754.9 1188.4,738.9 1210.3,724.3 1231.4,713.4 1253.4,709.6 1275.5,711.0 1297.5,714.1 1319.5,722.7 1341.2,730.9 1363.3,737.8 1385.3,742.6 1407.4,748.2 1428.4,753.0 1450.4,758.1 1472.5,760.2 1494.5,761.6 1516.6,762.6 1538.6,765.4 1560.3,769.5 1582.3,774.3 1604.4,779.5 1625.4,785.7 1647.4,791.6 1669.5,795.7 1691.5,799.5 1713.6,801.5 1735.6,802.2" fill="none" stroke="#f4f400" stroke-width="0.95" stroke-linejoin="round"/>
<path d="M1168.0 107.5 H1147.0 M1153.0 103.0 L1147.0 107.5 L1153.0 112.0" fill="none" stroke="#ffffff" stroke-width="1.2"/>
<path d="M1205.0 136.0 H1189.0 M1195.0 131.5 L1189.0 136.0 L1195.0 140.5" fill="none" stroke="#aaaaaa" stroke-width="1.2"/>
<path d="M1014.0 592.5 H993.0 M999.0 588.0 L993.0 592.5 L999.0 597.0" fill="none" stroke="#ffffff" stroke-width="1.2"/>
</svg>
<div class="btn" style="left:-1px;width:66px"><span style="padding-right:2px">分时</span></div>
<div class="btn" style="left:67px;width:71px"><span style="padding-left:8px">5日</span><span class="tri"></span></div>
<div class="btn" style="left:140px;width:69px">5分钟</div>
<div class="btn" style="left:211px;width:69px">15分钟</div>
<div class="btn" style="left:282px;width:69px">30分钟</div>
<div class="btn" style="left:353px;width:69px">60分钟</div>
<div class="btn on" style="left:424px;width:69px">日线</div>
<div class="btn" style="left:495px;width:69px">周线</div>
<div class="btn" style="left:566px;width:69px">月线</div>
<div class="btn" style="left:637px;width:104px">更多周期<span class="tri"></span></div>
<div class="btn" style="left:1208px;width:32px"></div>
<div class="btn" style="left:1242px;width:32px"></div>
<div class="btn" style="left:1276px;width:32px"></div>
<div class="btn on" style="left:1310px;width:72px">复权<span class="tri"></span></div>
<div class="btn" style="left:1384px;width:70px">叠加<span class="tri"></span></div>
<div class="btn" style="left:1456px;width:69px">筹码</div>
<div class="btn on" style="left:1527px;width:69px">画线</div>
<div class="btn" style="left:1598px;width:71px"><span style="padding-left:3px">显示</span><span class="tri"></span></div>
<div class="btn" style="left:1671px;width:69px">简约</div>
<div class="btn" style="left:1742px;width:69px;background:#121212"><span style="position:absolute;left:6px;top:0">展开</span></div>
<div class="btn" style="left:1813px;width:32px"></div>
<svg class="abs" style="left:1208px;top:4px" width="34" height="34" viewBox="0 0 34 34"><g fill="none" stroke="#c8c8c8" stroke-width="1.8"><rect x="9.5" y="16" width="16" height="10.5" rx="1.5"/><path d="M8 14.5 V11 a5 5 0 0 1 10 0 V16"/><path d="M17.5 19.5v3.5"/></g></svg>
<svg class="abs" style="left:1242px;top:4px" width="34" height="34" viewBox="0 0 34 34"><path d="M9 17.5H26M17.5 9V26" stroke="#c8c8c8" stroke-width="1.8" fill="none"/></svg>
<svg class="abs" style="left:1276px;top:4px" width="34" height="34" viewBox="0 0 34 34"><path d="M9 17.5H26" stroke="#c8c8c8" stroke-width="1.8" fill="none"/></svg>
<svg class="abs" style="left:1788px;top:15px" width="16" height="12" viewBox="0 0 16 12"><path d="M7 0.5V11.5L0.5 6zM14.5 0.5V11.5L8 6z" fill="#aaa"/></svg>
<svg class="abs" style="left:1813px;top:4px" width="34" height="34" viewBox="0 0 34 34"><g fill="none" stroke="#c8c8c8" stroke-width="1.7"><path d="M7 7L14 14M14 8.5V14H8.5"/><path d="M27 7L20 14M20 8.5V14H25.5"/><path d="M7 27L14 20M14 25.5V20H8.5"/><path d="M27 27L20 20M20 25.5V20H25.5"/></g></svg>
<div class="t" style="left:3px;top:49px;font-size:18px;line-height:20px;color:#ffffa0">新安股份</div>
<div class="t" style="left:82.5px;top:49px;font-size:18px;line-height:20px;color:#9a9a9a;letter-spacing:-0.25px">(日线,前复权)</div>
<div class="abs" style="left:194px;top:46px;width:21px;height:21px;border:1px solid #555;border-radius:2px;text-align:center;line-height:22px;font-size:16px;color:#ddd">?</div>
<svg class="abs" style="left:225px;top:46px" width="24" height="24" viewBox="0 0 24 24"><g fill="none" stroke="#606060" stroke-width="2.3"><circle cx="12" cy="12" r="3.4"/><path d="M10.2 2.5h3.6l.6 2.6 1.8.8 2.3-1.4 2.5 2.5-1.4 2.3.8 1.8 2.6.6v3.6l-2.6.6-.8 1.8 1.4 2.3-2.5 2.5-2.3-1.4-1.8.8-.6 2.6h-3.6l-.6-2.6-1.8-.8-2.3 1.4-2.5-2.5 1.4-2.3-.8-1.8-2.6-.6v-3.6l2.6-.6.8-1.8-1.4-2.3 2.5-2.5 2.3 1.4 1.8-.8z" transform="translate(1.2 1.2) scale(0.9)"/></g></svg>
<div class="t" style="left:258px;top:48.7px;font-size:18px;line-height:20px;color:#9a9a9a">神奇九转</div>
<div class="t" style="left:338px;top:48.7px;font-size:18px;line-height:20px;color:#8a8a8a;letter-spacing:0.2px">DKX(10)</div>
<div class="t" style="left:418px;top:48.7px;font-size:18px;line-height:20px;color:#ffffff;letter-spacing:0.15px">DKX:10.19</div>
<div class="t" style="left:532px;top:48.7px;font-size:18px;line-height:20px;color:#ffff00;letter-spacing:0.55px">MADKX:10.37</div>
<svg class="abs" style="left:509px;top:47px" width="14" height="22" viewBox="0 0 14 22"><path d="M7 2V19M2.5 14L7 19.5L11.5 14" fill="none" stroke="#fff" stroke-width="1"/></svg>
<svg class="abs" style="left:654px;top:47px" width="14" height="22" viewBox="0 0 14 22"><path d="M7 2V19M2.5 14L7 19.5L11.5 14" fill="none" stroke="#ffff00" stroke-width="1"/></svg>
<div class="t" style="left:1495px;top:47px;font-size:18px;line-height:20px;color:#9a9a9a">沪股通</div>
<div class="t" style="left:1568px;top:47px;font-size:18px;line-height:20px;color:#9a9a9a">融资融券</div>
<div class="t" style="left:1660px;top:47px;font-size:18px;line-height:20px;color:#9a9a9a">设置均线</div>
<div class="abs" style="left:1739px;top:54px;width:0;height:0;border-left:4px solid transparent;border-right:4px solid transparent;border-top:5px solid #888"></div>
<svg class="abs" style="left:284px;top:78px" width="12" height="16" viewBox="0 0 12 16"><path d="M6 0.5L10.5 5H8V11H10.5L6 15.5L1.5 11H4V5H1.5Z" fill="#c8c8c8"/></svg>
<svg class="abs" style="left:875px;top:78px" width="12" height="16" viewBox="0 0 12 16"><path d="M6 0.5L10.5 5H8V11H10.5L6 15.5L1.5 11H4V5H1.5Z" fill="#c8c8c8"/></svg>
<svg class="abs" style="left:1138px;top:78px" width="12" height="16" viewBox="0 0 12 16"><path d="M6 0.5L10.5 5H8V11H10.5L6 15.5L1.5 11H4V5H1.5Z" fill="#c8c8c8"/></svg>
<svg class="abs" style="left:1204px;top:78px" width="12" height="16" viewBox="0 0 12 16"><path d="M6 0.5L10.5 5H8V11H10.5L6 15.5L1.5 11H4V5H1.5Z" fill="#c8c8c8"/></svg>
<svg class="abs" style="left:1576px;top:78px" width="12" height="16" viewBox="0 0 12 16"><path d="M6 0.5L10.5 5H8V11H10.5L6 15.5L1.5 11H4V5H1.5Z" fill="#c8c8c8"/></svg>
<svg class="abs" style="left:589px;top:78px" width="16" height="16" viewBox="0 0 16 16"><g stroke="#d0d0d0" stroke-width="2.2"><path d="M8 0.8V15.2M0.8 8H15.2M2.9 2.9L13.1 13.1M13.1 2.9L2.9 13.1"/></g><circle cx="8" cy="8" r="4.6" fill="#d0d0d0"/></svg>
<svg class="abs" style="left:786px;top:78px" width="16" height="16" viewBox="0 0 16 16"><g stroke="#d0d0d0" stroke-width="2.2"><path d="M8 0.8V15.2M0.8 8H15.2M2.9 2.9L13.1 13.1M13.1 2.9L2.9 13.1"/></g><circle cx="8" cy="8" r="4.6" fill="#d0d0d0"/></svg>
<svg class="abs" style="left:1026px;top:78px" width="16" height="16" viewBox="0 0 16 16"><g stroke="#d0d0d0" stroke-width="2.2"><path d="M8 0.8V15.2M0.8 8H15.2M2.9 2.9L13.1 13.1M13.1 2.9L2.9 13.1"/></g><circle cx="8" cy="8" r="4.6" fill="#d0d0d0"/></svg>
<div class="abs" style="left:21px;top:96px;width:1074px;height:95px;background:#050505"></div>
<div class="hd" style="left:23.0px;width:261.0px"></div>
<div class="hd" style="left:286.3px;width:307.7px"></div>
<div class="hd" style="left:596.3px;width:467.7px"></div>
<div class="hd" style="left:1066.5px;width:27.3px"></div>
<div class="bd" style="left:23.0px;width:261.0px"></div>
<div class="bd" style="left:286.3px;width:307.7px"></div>
<div class="bd" style="left:596.3px;width:467.7px"></div>
<div class="abs" style="left:1066.5px;top:133px;width:27.3px;height:55.5px;background:#333"></div>
<div class="tab" style="left:29.7px;color:#ff6000;">常用</div>
<div class="tab" style="left:81.0px;">趋势</div>
<div class="tab" style="left:133.0px;">时间</div>
<div class="tab" style="left:185.0px;">空间</div>
<div class="tab" style="left:237.0px;">时空</div>
<div class="abs" style="left:29px;top:132px;width:36px;height:2px;background:#ff5a00"></div>
<div class="tab" style="left:422.5px">基本</div>
<div class="tab" style="left:812.5px">工具</div>
<svg class="abs" style="left:1073px;top:109px" width="16" height="16" viewBox="0 0 16 16"><path d="M1.5 1.5L14.5 14.5M14.5 1.5L1.5 14.5" stroke="#7a7a7a" stroke-width="1.3" fill="none"/></svg>
<div class="tool" style="left:32.2px"><svg width="28" height="28" viewBox="1 1 28 28" fill="none"><path d="M7.5 22.5L22.5 7.5" stroke="#a8a8a8" stroke-width="1.3"/><rect x="6" y="21" width="3.2" height="3.2" fill="#a8a8a8"/><rect x="21" y="6" width="3.2" height="3.2" fill="#a8a8a8"/></svg></div>
<div class="tool" style="left:74.2px"><svg width="28" height="28" viewBox="1 1 28 28" fill="none"><path d="M7.5 22.5L23 7M16.5 7H23V13.5" stroke="#a8a8a8" stroke-width="1.4" fill="none"/><rect x="6" y="21" width="3.2" height="3.2" fill="#a8a8a8"/></svg></div>
<div class="tool" style="left:116.2px"><svg width="28" height="28" viewBox="1 1 28 28" fill="none"><path d="M7.5 22.5L23.5 6.5" stroke="#a8a8a8" stroke-width="1.3"/><rect x="6" y="21" width="3.2" height="3.2" fill="#a8a8a8"/></svg></div>
<div class="tool" style="left:158.2px"><svg width="28" height="28" viewBox="1 1 28 28" fill="none"><path d="M7 6.5L23.5 23" stroke="#a8a8a8" stroke-width="1.3"/></svg></div>
<div class="tool" style="left:200.2px"><svg width="28" height="28" viewBox="1 1 28 28" fill="none"><path d="M4.5 15H25.5" stroke="#a8a8a8" stroke-width="2"/></svg></div>
<div class="tool" style="left:242.2px"><svg width="28" height="28" viewBox="1 1 28 28" fill="none"><path d="M7.5 15H22.5M15 7.5V22.5" stroke="#a8a8a8" stroke-width="2.6"/></svg></div>
<div class="tab" style="left:301.5px;top:153px">颜色</div>
<div class="abs" style="left:351px;top:151px;width:20px;height:20px;background:#ffff00;border:2px solid #484848"></div>
<div class="tab" style="left:386.5px;top:153px">线型</div>
<div class="tab" style="left:491px;top:153px">粗细</div>
<div class="abs" style="left:435px;top:148.5px;width:43px;height:27px;border:1px solid #555"><svg width="43" height="27" viewBox="0 0 43 27"><path d="M3 13.5H21" stroke="#8a8a8a" stroke-width="2.6"/><path d="M28 11.5H39L33.5 17.5Z" fill="#9a9a9a"/></svg></div>
<div class="abs" style="left:540px;top:148.5px;width:43px;height:27px;border:1px solid #555"><svg width="43" height="27" viewBox="0 0 43 27"><path d="M3 13.5H21" stroke="#8a8a8a" stroke-width="2.6"/><path d="M28 11.5H39L33.5 17.5Z" fill="#9a9a9a"/></svg></div>
<div class="tool" style="left:608.2px;border-color:#8a8a8a"><svg width="28" height="28" viewBox="1 1 28 28" fill="none"><path d="M10 4.5L10 22L14 18.5L17 25L19.5 23.8L16.5 17.5L21.5 17Z" fill="#e8e88c" stroke="#e8e88c" stroke-width="0.6"/><path d="M12 9.5L12 17.5L14 16L17.5 16Z" fill="#2a2a2a"/></svg></div>
<div class="tool" style="left:650.2px;border-color:#4a4a4a"><svg width="28" height="28" viewBox="1 1 28 28" fill="none"><path d="M15 5L21 13H17.5V24H12.5V13H9Z" fill="#ff5555"/></svg></div>
<div class="tool" style="left:692.2px;border-color:#4a4a4a"><svg width="28" height="28" viewBox="1 1 28 28" fill="none"><path d="M15 25L21 17H17.5V6H12.5V17H9Z" fill="#3cb83c"/></svg></div>
<div class="tool" style="left:734.2px;border-color:#4a4a4a"><svg width="28" height="28" viewBox="1 1 28 28" fill="none"><text x="15" y="15.5" font-family="Liberation Sans,sans-serif" font-size="13" fill="#b4b4b4" text-anchor="middle" letter-spacing="0.8">123</text><path d="M5 21.5H26" stroke="#b4b4b4" stroke-width="1.2"/><rect x="4" y="19.5" width="4" height="4" fill="#b4b4b4"/></svg></div>
<div class="tool" style="left:776.2px;border-color:#4a4a4a"><svg width="28" height="28" viewBox="1 1 28 28" fill="none"><path d="M9 23L15 7.5L21 23M11 18.5H19" stroke="#b4b4b4" stroke-width="1.3" fill="none"/></svg></div>
<div class="tool" style="left:818.2px;border-color:#4a4a4a"><svg width="28" height="28" viewBox="1 1 28 28" fill="none"><g transform="rotate(-40 15 15)"><rect x="4.5" y="10.5" width="21" height="9" stroke="#8a8a8a" stroke-width="1.2" fill="none"/><path d="M9 16.5V14M12 16.5V14M15 17V13M18 16.5V14M21 16.5V14" stroke="#8a8a8a" stroke-width="1"/></g></svg></div>
<div class="tool" style="left:860.2px;border-color:#4a4a4a"><svg width="28" height="28" viewBox="1 1 28 28" fill="none"><path d="M12.3 9.2L25 7.8L17.2 16.4L4.7 17Z M4.7 17V21.2H17.2V16.4M17.2 21.2L25 12.2V7.8" stroke="#a0a0a0" stroke-width="1.4" fill="none" stroke-linejoin="round"/></svg></div>
<div class="tool" style="left:902.2px;border-color:#4a4a4a"><svg width="28" height="28" viewBox="1 1 28 28" fill="none"><path d="M7.5 10.5H22.5M12 10.5V8H18V10.5M9.5 10.5V22.5a1.5 1.5 0 0 0 1.5 1.5H19a1.5 1.5 0 0 0 1.5-1.5V10.5M12.5 14V20.5M15 14V20.5M17.5 14V20.5" stroke="#8a8a8a" stroke-width="1.3" fill="none"/></svg></div>
<div class="tool" style="left:944.2px;border-color:#4a4a4a"><svg width="28" height="28" viewBox="1 1 28 28" fill="none"><g stroke="#808080" stroke-width="1.5" fill="none" transform="translate(2.1 2.1) scale(0.86)"><circle cx="15" cy="15" r="3"/><path d="M13.4 6.5h3.2l.5 2.3 1.6.7 2-1.3 2.2 2.2-1.3 2 .7 1.6 2.3.5v3.2l-2.3.5-.7 1.6 1.3 2-2.2 2.2-2-1.3-1.6.7-.5 2.3h-3.2l-.5-2.3-1.6-.7-2 1.3-2.2-2.2 1.3-2-.7-1.6-2.3-.5v-3.2l2.3-.5.7-1.6-1.3-2 2.2-2.2 2 1.3 1.6-.7z"/></g></svg></div>
<div class="tool" style="left:986.2px;border-color:#4a4a4a"><svg width="28" height="28" viewBox="1 1 28 28" fill="none"><path d="M4.5 14C8 5.5 22 5.5 25.5 14C22 22.5 8 22.5 4.5 14Z" stroke="#808080" stroke-width="1.5" fill="none"/><circle cx="15" cy="13.5" r="3.6" stroke="#808080" stroke-width="1.5" fill="none"/></svg></div>
<div class="tool" style="left:1028.2px;border-color:#8a8a8a"><svg width="28" height="28" viewBox="1 1 28 28" fill="none"><path d="M21.5 13V6.5H6.5V22.5H14" stroke="#e8e88c" stroke-width="1.6" fill="none"/><circle cx="16.5" cy="21.5" r="2.3" stroke="#e8e88c" stroke-width="1.4" fill="none"/><circle cx="22.5" cy="21.5" r="2.3" stroke="#e8e88c" stroke-width="1.4" fill="none"/><path d="M17.5 19.5L22 14.5M21.5 19.5L17 14.5" stroke="#e8e88c" stroke-width="1.3"/></svg></div>
<div class="abs" style="left:1007px;top:186px;width:58px;height:34px;background:#2b2b2b;border:1px solid #484848;text-align:center;line-height:39px;font-size:18px;font-weight:400;color:#dcdcdc">截屏</div>
<svg class="abs" style="left:1027px;top:176px" width="22" height="11" viewBox="0 0 22 11"><path d="M0.5 10.5L11 1L21.5 10.5" fill="#2b2b2b" stroke="#484848" stroke-width="1"/><path d="M1.8 10.8H20.2" stroke="#2b2b2b" stroke-width="1.6"/></svg>
<div class="t" style="left:1171px;top:98px;font-size:18px;line-height:21px;color:#fff;letter-spacing:0.3px">12.96</div>
<div class="t" style="left:1208.5px;top:127px;font-size:18px;line-height:21px;color:#aaa;letter-spacing:0.3px">12.72</div>
<div class="t" style="left:1017px;top:582.7px;font-size:18px;line-height:21px;color:#fff;letter-spacing:0.3px">9.50</div>
<div class="t" style="left:1637.5px;top:368.5px;width:20px;text-align:center;font-size:16.5px;line-height:20px;color:#ffa500">1</div>
<div class="t" style="left:1659.0px;top:318.0px;width:20px;text-align:center;font-size:16.5px;line-height:20px;color:#ffa500">2</div>
<div class="t" style="left:1681.5px;top:338.5px;width:20px;text-align:center;font-size:16.5px;line-height:20px;color:#ffa500">3</div>
<div class="t" style="left:1703.5px;top:321.0px;width:20px;text-align:center;font-size:16.5px;line-height:20px;color:#ffa500">4</div>
<div class="t" style="left:1725.3px;top:318.0px;width:20px;text-align:center;font-size:16.5px;line-height:20px;color:#ffa500">5</div>
<div class="t" style="left:1495px;top:144.0px;font-size:26.7px;line-height:35px;font-weight:400;color:#ff0000"><span style="letter-spacing:0.65px">12.24</span>复盘新安：</div>
<div class="t" style="left:1495px;top:179.0px;font-size:26.7px;line-height:35px;font-weight:400;color:#ff0000">站上趋势压力线。</div>
<div class="t" style="left:1495px;top:214.0px;font-size:26.7px;line-height:35px;font-weight:400;color:#ff0000">回抽不破ZG买点。</div>
<div class="ax" style="top:165.5px">12.50</div>
<div class="ax" style="top:235.5px">12.00</div>
<div class="ax" style="top:305.5px">11.50</div>
<div class="ax" style="top:375.8px">11.00</div>
<div class="ax" style="top:446.0px">10.50</div>
<div class="ax" style="top:516.0px">10.00</div>
<div class="ax" style="top:645.3px">0.57</div>
<div class="ax" style="top:701.3px">0.36</div>
<div class="ax" style="top:757.3px">0.15</div>
<div class="ax" style="top:812.8px">-0.06</div>
<div class="ax" style="top:858.3px">-0.28</div>
<div class="abs" style="left:-2px;top:622px;width:19px;height:21px;border:1px solid #555;border-radius:2px;text-align:center;line-height:22px;font-size:16px;color:#ddd">?</div>
<div class="t" style="left:30px;top:623px;font-size:18px;line-height:20px;color:#828282;letter-spacing:0.45px">MACD(12,26,9)</div>
<div class="t" style="left:170px;top:623px;font-size:18px;line-height:20px;color:#fff;letter-spacing:0.2px">DIF:-0.163</div>
<div class="t" style="left:284px;top:623px;font-size:18px;line-height:20px;color:#ffff00;letter-spacing:0.3px">DEA:-0.130</div>
<div class="t" style="left:407px;top:623px;font-size:18px;line-height:20px;color:#ff00ff;letter-spacing:0.5px">MACD:-0.067</div>
<svg class="abs" style="left:262px;top:622px" width="14" height="22" viewBox="0 0 14 22"><path d="M7 20V3M2.5 8L7 2.5L11.5 8" fill="none" stroke="#fff" stroke-width="1"/></svg>
<svg class="abs" style="left:384px;top:622px" width="14" height="22" viewBox="0 0 14 22"><path d="M7 2V19M2.5 14L7 19.5L11.5 14" fill="none" stroke="#ffff00" stroke-width="1"/></svg>
<svg class="abs" style="left:526px;top:622px" width="14" height="22" viewBox="0 0 14 22"><path d="M7 20V3M2.5 8L7 2.5L11.5 8" fill="none" stroke="#ff00ff" stroke-width="1"/></svg>
<div class="t" style="left:1533.5px;top:623.5px;font-size:18px;line-height:20px;color:#9a9a9a">改参数</div>
<div class="t" style="left:1601.5px;top:623.5px;font-size:18px;line-height:20px;color:#9a9a9a">加指标</div>
<div class="t" style="left:1669.5px;top:623.5px;font-size:18px;line-height:20px;color:#9a9a9a">换指标</div>
<div class="abs" style="left:1737px;top:622px;width:21px;height:21px;border:1px solid #555;border-radius:2px"><svg width="21" height="21" viewBox="0 0 21 21"><path d="M5 5L16 16M16 5L5 16" stroke="#8a8a8a" stroke-width="1.1"/></svg></div>
<div class="t" style="left:98.5px;top:887px;font-size:18px;line-height:21px;color:#9a9a9a;letter-spacing:0.4px">09</div>
<div class="t" style="left:581.0px;top:887px;font-size:18px;line-height:21px;color:#9a9a9a;letter-spacing:0.4px">10</div>
<div class="t" style="left:952.5px;top:887px;font-size:18px;line-height:21px;color:#9a9a9a;letter-spacing:0.4px">11</div>
<div class="t" style="left:1391.0px;top:887px;font-size:18px;line-height:21px;color:#9a9a9a;letter-spacing:0.4px">12</div>
<div class="abs" style="left:-3px;top:881px;width:19px;height:21px;border:1px solid #484848;border-radius:2px"><svg width="19" height="21" viewBox="0 0 19 21"><path d="M10 3.5L3 10.5L10 17.5M16 3.5L9 10.5L16 17.5" stroke="#aaa" stroke-width="1.1" fill="none"/></svg></div>
<div class="abs" style="left:1825px;top:881px;width:21px;height:21px;border:1px solid #484848;border-radius:2px"><svg width="21" height="21" viewBox="0 0 21 21"><path d="M4 3.5L11 10.5L4 17.5M10 3.5L17 10.5L10 17.5" stroke="#aaa" stroke-width="1.1" fill="none"/></svg></div>
<div class="abs" style="left:1848px;top:0;width:2px;height:908px;background:#363636"></div>
<div class="abs" style="left:1850px;top:0;width:11px;height:908px;background:linear-gradient(180deg,#070707 0,#070707 290px,#3a3a3a 470px,#3a3a3a 515px,#070707 720px,#070707 100%)"></div>
<div class="abs" style="left:1860px;top:0;width:1px;height:908px;background:#1c1c1c"></div>
<svg class="abs" style="left:1851px;top:476px" width="8" height="33" viewBox="0 0 8 33"><path d="M7.3 0.5V32.5L1 16.5Z" fill="#d0d0d0"/></svg>
<div class="abs" style="left:0;top:908.5px;width:1861px;height:41px;background:#171717"></div>
<svg class="abs" style="left:4px;top:912px" width="34" height="34" viewBox="0 0 34 34"><circle cx="17" cy="17" r="16" fill="#e8560a"/><path d="M22.6 4C17 8.5 10 11 5 12.5L6 18C8 17.3 9.8 17 11 17.3C15.5 14 20 9 22.6 4Z" fill="#fff"/><path d="M24 4.8C22 11 17.5 16.5 12 20.2C13.2 21.5 14 23 14.4 25C15.6 24.2 16.6 24 17.6 24.2C21.8 18.5 24.3 11.5 24 4.8Z" fill="#fff"/><path d="M25.4 6C26 13 23.6 19.8 19.4 25C20.6 26.3 21.2 27.6 21.6 29.5C26.2 23.5 27.6 13.5 25.4 6Z" fill="#fff"/></svg>
<div class="t" style="left:43px;top:910px;font-size:27.5px;line-height:34px;font-weight:900;letter-spacing:0.9px;color:#e8560a;font-family:'Noto Sans CJK SC',sans-serif">东方财富</div>
<div class="t" style="left:1683.5px;top:918px;font-size:16px;line-height:22px;font-weight:700;color:#ff6000;font-family:'Noto Sans CJK SC',sans-serif">权威<span style="display:inline-block;width:16px;text-align:center">·</span>专业<span style="display:inline-block;width:16px;text-align:center">·</span>及时<span style="display:inline-block;width:16px;text-align:center">·</span>互动</div>
</body></html>
